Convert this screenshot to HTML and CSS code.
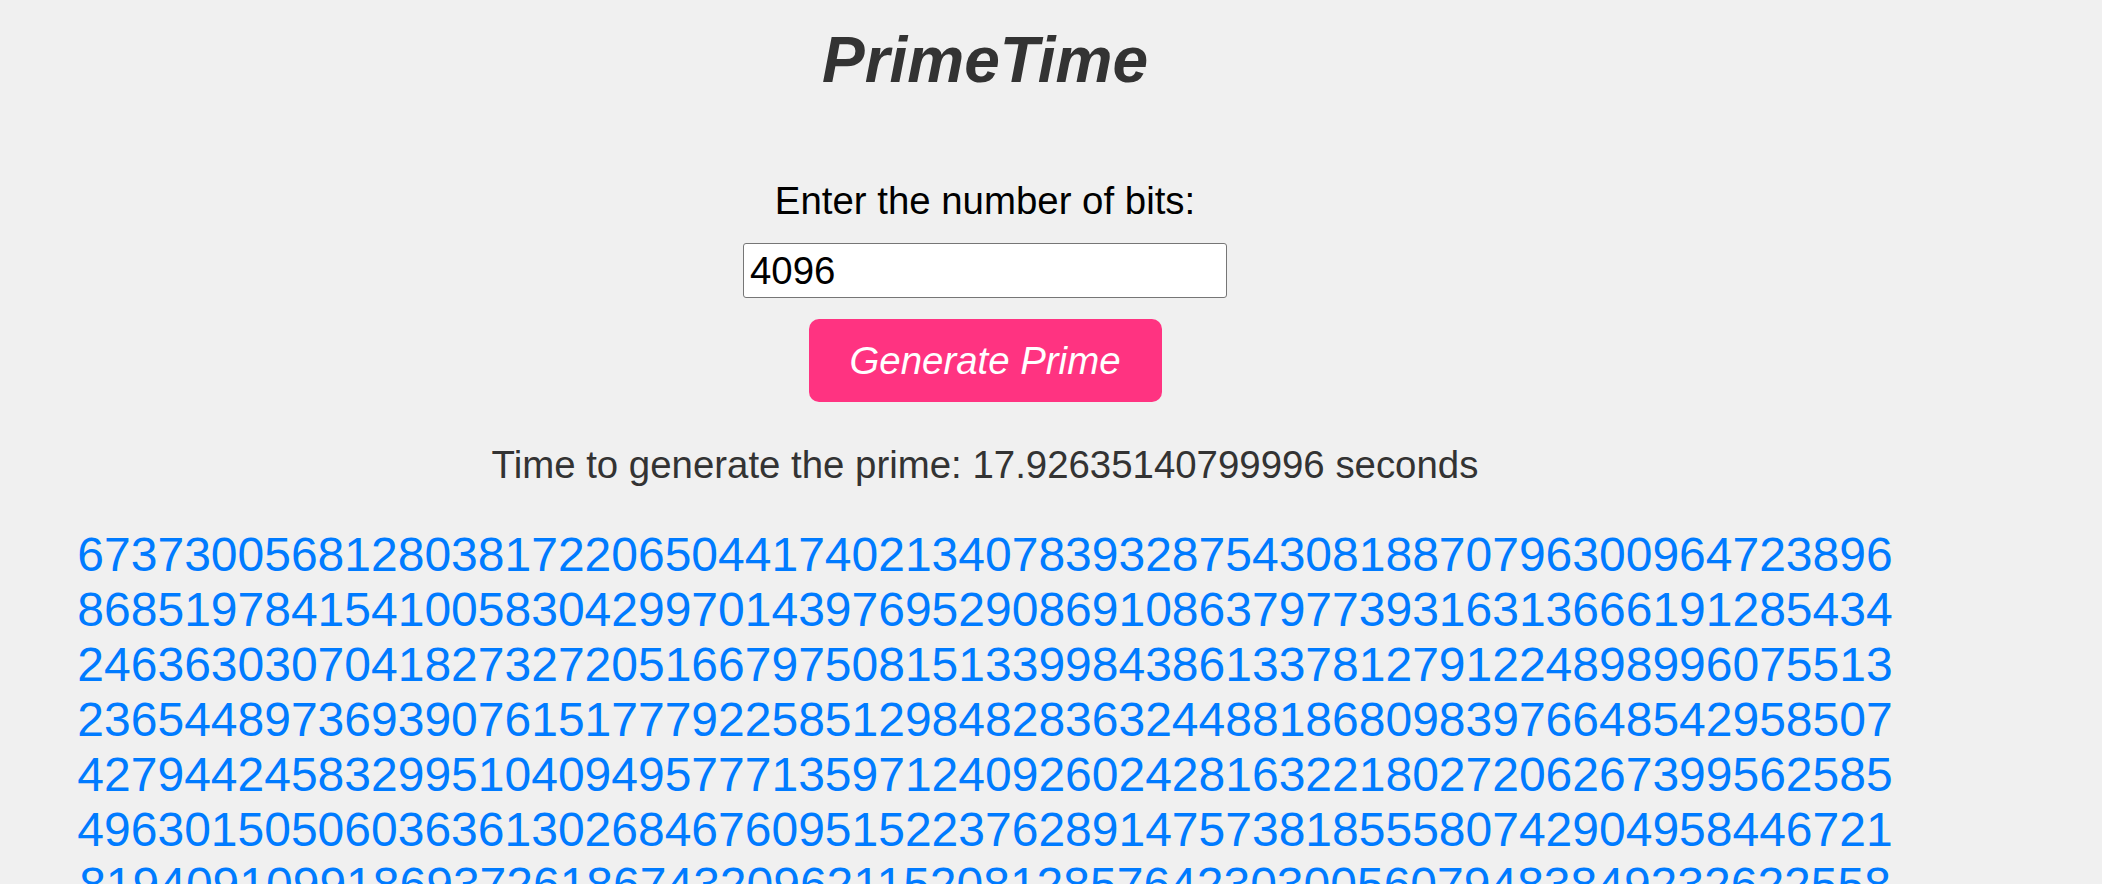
FILE: index.html
```html
<!DOCTYPE html>
<html lang="en">
<head>
<meta charset="utf-8">
<title>PrimeTime</title>
<link rel="stylesheet" href="styles.css">
</head>
<body>
<main class="app">
  <h1 class="title">PrimeTime</h1>
  <form class="controls">
    <label class="bits-label" for="bits">Enter the number of bits:</label>
    <input class="bits-input" id="bits" type="text" value="4096">
    <button class="generate" type="button">Generate Prime</button>
  </form>
  <p class="elapsed">Time to generate the prime: 17.92635140799996 seconds</p>
  <p class="prime">67373005681280381722065044174021340783932875430818870796300964723896868519784154100583042997014397695290869108637977393163136661912854342463630307041827327205166797508151339984386133781279122489899607551323654489736939076151777922585129848283632448818680983976648542958507427944245832995104094957771359712409260242816322180272062673995625854963015050603636130268467609515223762891475738185558074290495844672181940910991869372618674320962115208128576423030056079483849232622558</p>
</main>
</body>
</html>
```

FILE: styles.css
```css
html, body {
  margin: 0;
  padding: 0;
  background: #f0f0f0;
}

body {
  font-family: "Liberation Sans", Arial, sans-serif;
}

.app {
  width: 1828px;
  margin-left: 71px;
  display: flex;
  flex-direction: column;
  align-items: center;
  text-align: center;
}

.title {
  margin: 23px 0 0;
  font-size: 64px;
  font-weight: bold;
  font-style: italic;
  color: #333333;
  line-height: normal;
}

.controls {
  margin-top: 82px;
  display: flex;
  flex-direction: column;
  align-items: center;
}

.bits-label {
  font-size: 38.4px;
  color: #000000;
}

.bits-input {
  box-sizing: border-box;
  margin-top: 20px;
  width: 484px;
  height: 55px;
  padding: 0 6px;
  border: 1px solid #767676;
  border-radius: 3px;
  background: #ffffff;
  font-family: "Liberation Sans", Arial, sans-serif;
  font-size: 38.4px;
  color: #000000;
}

.generate {
  box-sizing: border-box;
  margin-top: 21px;
  width: 353px;
  height: 83px;
  padding: 0;
  border: none;
  border-radius: 10px;
  background: #ff3381;
  color: #ffffff;
  font-family: "Liberation Sans", Arial, sans-serif;
  font-size: 38.4px;
  font-style: italic;
}

.elapsed {
  margin: 41px 0 0;
  font-size: 38.4px;
  color: #333333;
}

.prime {
  margin: 40px 0 0;
  width: 100%;
  font-size: 48px;
  color: #007bff;
  word-break: break-all;
}
```
